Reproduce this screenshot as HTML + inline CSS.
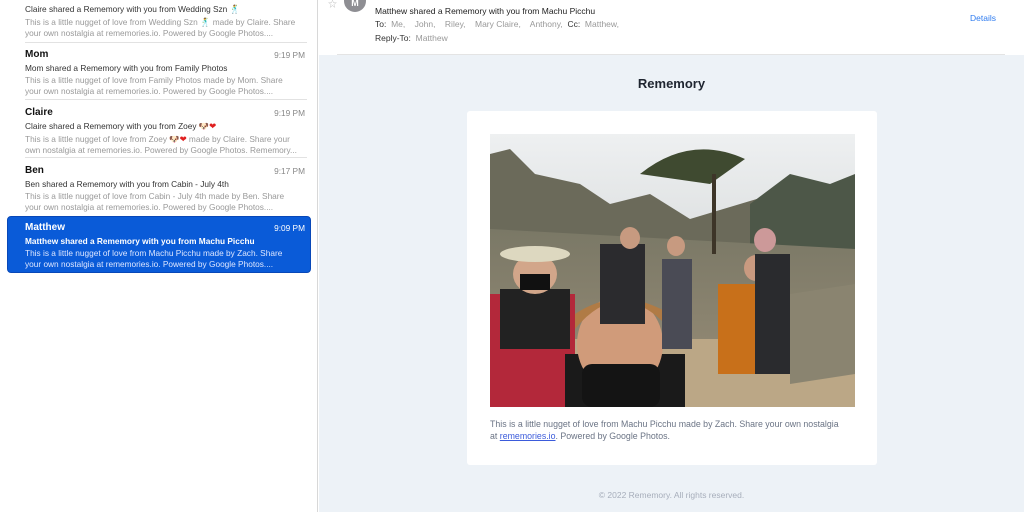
<!DOCTYPE html>
<html><head><meta charset="utf-8"><style>
*{margin:0;padding:0;box-sizing:border-box}
body{width:1024px;height:512px;overflow:hidden;font-family:"Liberation Sans","Noto Sans CJK JP",sans-serif;background:#fff;position:relative}
.left{position:absolute;left:0;top:0;width:318px;height:512px;background:#fff;border-right:1px solid #d8d8d8}
.item{position:absolute;left:25px;width:282px;font-size:8.3px;color:#333}
.item .n{font-size:10px;font-weight:bold;color:#111}
.item .t{position:absolute;right:2px;top:1px;font-size:8.3px;color:#888}
.item .s{margin-top:3px}
.item .p{color:#999;line-height:11px;margin-top:2px}
.sep{position:absolute;left:25px;width:282px;height:1px;background:#e2e2e2}
.sel{position:absolute;left:7px;top:216px;width:304px;height:57px;background:#0a5bd8;border-radius:4px;border:1px solid #0848b8}
.right{position:absolute;left:319px;top:0;width:705px;height:512px;background:#edf2f7}
.hdr{position:absolute;left:0;top:0;width:705px;height:55px;background:#fff}
</style></head><body>
<div class="left">
  <div class="item" style="top:4px"><div class="s" style="margin-top:0">Claire shared a Rememory with you from Wedding Szn <span style="color:#7a3aa0">🕺</span></div><div class="p">This is a little nugget of love from Wedding Szn <span style="color:#7a3aa0">🕺</span> made by Claire. Share<br>your own nostalgia at rememories.io. Powered by Google Photos....</div></div>
  <div class="sep" style="top:42px"></div>
  <div class="item" style="top:49px"><div class="n">Mom</div><div class="t">9:19 PM</div><div class="s">Mom shared a Rememory with you from Family Photos</div><div class="p">This is a little nugget of love from Family Photos made by Mom. Share<br>your own nostalgia at rememories.io. Powered by Google Photos....</div></div>
  <div class="sep" style="top:99px"></div>
  <div class="item" style="top:107px"><div class="n">Claire</div><div class="t">9:19 PM</div><div class="s">Claire shared a Rememory with you from Zoey 🐶<span style="color:#e02020">❤</span></div><div class="p">This is a little nugget of love from Zoey 🐶<span style="color:#e02020">❤</span> made by Claire. Share your<br>own nostalgia at rememories.io. Powered by Google Photos. Rememory...</div></div>
  <div class="sep" style="top:157px"></div>
  <div class="item" style="top:165px"><div class="n">Ben</div><div class="t">9:17 PM</div><div class="s">Ben shared a Rememory with you from Cabin - July 4th</div><div class="p">This is a little nugget of love from Cabin - July 4th made by Ben. Share<br>your own nostalgia at rememories.io. Powered by Google Photos....</div></div>
  <div class="sel"></div>
  <div class="item" style="top:222px;color:#fff"><div class="n" style="color:#fff">Matthew</div><div class="t" style="color:#fff">9:09 PM</div><div class="s" style="font-weight:bold">Matthew shared a Rememory with you from Machu Picchu</div><div class="p" style="color:#dde6ff">This is a little nugget of love from Machu Picchu made by Zach. Share<br>your own nostalgia at rememories.io. Powered by Google Photos....</div></div>
</div>
<div class="right">
  <div class="hdr">
    <div style="position:absolute;left:9px;top:-3px;font-size:9px;color:#bbb">☆</div>
    <div style="position:absolute;left:25px;top:-10px;width:22px;height:22px;border-radius:50%;background:#8e8e93;color:#fff;font-size:9px;font-weight:bold;text-align:center;line-height:26px">M</div>
    <div style="position:absolute;left:56px;top:6px;font-size:8.5px;color:#222">Matthew shared a Rememory with you from Machu Picchu</div>
    <div style="position:absolute;left:56px;top:19px;font-size:8.5px;color:#999"><span style="color:#333">To:</span>&nbsp; Me, &nbsp;&nbsp; John, &nbsp;&nbsp; Riley, &nbsp;&nbsp; Mary Claire, &nbsp;&nbsp; Anthony, &nbsp;<span style="color:#333">Cc:</span>&nbsp; Matthew,</div>
    <div style="position:absolute;left:56px;top:33px;font-size:8.5px;color:#999"><span style="color:#333">Reply-To:</span>&nbsp; Matthew</div>
    <div style="position:absolute;left:651px;top:13px;font-size:8.5px;color:#2f7cf0">Details</div>
    <div style="position:absolute;left:18px;top:54px;width:668px;height:1px;background:#e4e4e4"></div>
  </div>
  <div style="position:absolute;left:0;width:705px;top:76px;text-align:center;font-size:13px;font-weight:bold;color:#1f2530">Rememory</div>
  <div style="position:absolute;left:148px;top:111px;width:410px;height:354px;background:#fff;border-radius:3px">
    <svg style="position:absolute;left:23px;top:23px" width="365" height="273" viewBox="0 0 365 273">
      <defs>
        <linearGradient id="sky" x1="0" y1="0" x2="0" y2="1"><stop offset="0" stop-color="#eef0f1"/><stop offset="1" stop-color="#c4c8c8"/></linearGradient>
        <linearGradient id="gr" x1="0" y1="0" x2="0" y2="1"><stop offset="0" stop-color="#7a7866"/><stop offset="1" stop-color="#9a8e78"/></linearGradient>
      </defs>
      <rect width="365" height="273" fill="url(#sky)"/>
      <path d="M0 20 L20 15 L45 40 L90 50 L120 70 L160 60 L200 85 L250 70 L300 55 L340 75 L365 60 L365 273 L0 273Z" fill="#6b6a5a"/>
      <path d="M260 70 L300 40 L340 50 L365 40 L365 130 L260 120Z" fill="#4d5748"/>
      <path d="M0 95 L365 115 L365 273 L0 273Z" fill="url(#gr)"/>
      <rect x="0" y="205" width="365" height="68" fill="#bba786"/>
      <path d="M300 160 L365 150 L365 240 L300 250Z" fill="#8a8470"/>
      <path d="M150 40 Q200 0 255 25 L220 50Z" fill="#3f4a30"/>
      <rect x="222" y="40" width="4" height="80" fill="#3d3528"/>
      <rect x="0" y="160" width="85" height="113" fill="#b3283a"/>
      <rect x="10" y="155" width="70" height="60" fill="#222"/>
      <ellipse cx="45" cy="140" rx="22" ry="20" fill="#d2a68a"/>
      <ellipse cx="45" cy="120" rx="35" ry="8" fill="#ddd8c0"/>
      <rect x="30" y="140" width="30" height="16" fill="#111"/>
      <rect x="75" y="220" width="120" height="53" fill="#1a1a1a"/>
      <ellipse cx="130" cy="210" rx="43" ry="48" fill="#d09b7a"/>
      <path d="M85 195 Q130 140 180 195 L180 180 Q130 150 85 180Z" fill="#b07b45"/>
      <rect x="92" y="230" width="78" height="43" rx="10" fill="#141414"/>
      <rect x="110" y="110" width="45" height="80" fill="#2b2b2e"/>
      <ellipse cx="140" cy="104" rx="10" ry="11" fill="#c79a80"/>
      <rect x="172" y="125" width="30" height="90" fill="#4a4b55"/>
      <ellipse cx="186" cy="112" rx="9" ry="10" fill="#c79a80"/>
      <rect x="228" y="150" width="45" height="90" fill="#c8701a"/>
      <ellipse cx="266" cy="134" rx="12" ry="13" fill="#c99a80"/>
      <rect x="265" y="120" width="35" height="120" fill="#2a2b2e"/>
      <ellipse cx="275" cy="106" rx="11" ry="12" fill="#c99"/>
    </svg>
    <div style="position:absolute;left:23px;top:307px;font-size:8.8px;line-height:12px;color:#6b7485;width:380px;white-space:nowrap">This is a little nugget of love from Machu Picchu made by Zach. Share your own nostalgia<br>at <span style="color:#3b5bdb;text-decoration:underline">rememories.io</span>. Powered by Google Photos.</div>
  </div>
  <div style="position:absolute;left:0;width:705px;top:490px;text-align:center;font-size:8.5px;color:#a7aebb">© 2022 Rememory. All rights reserved.</div>
</div>
</body></html>
